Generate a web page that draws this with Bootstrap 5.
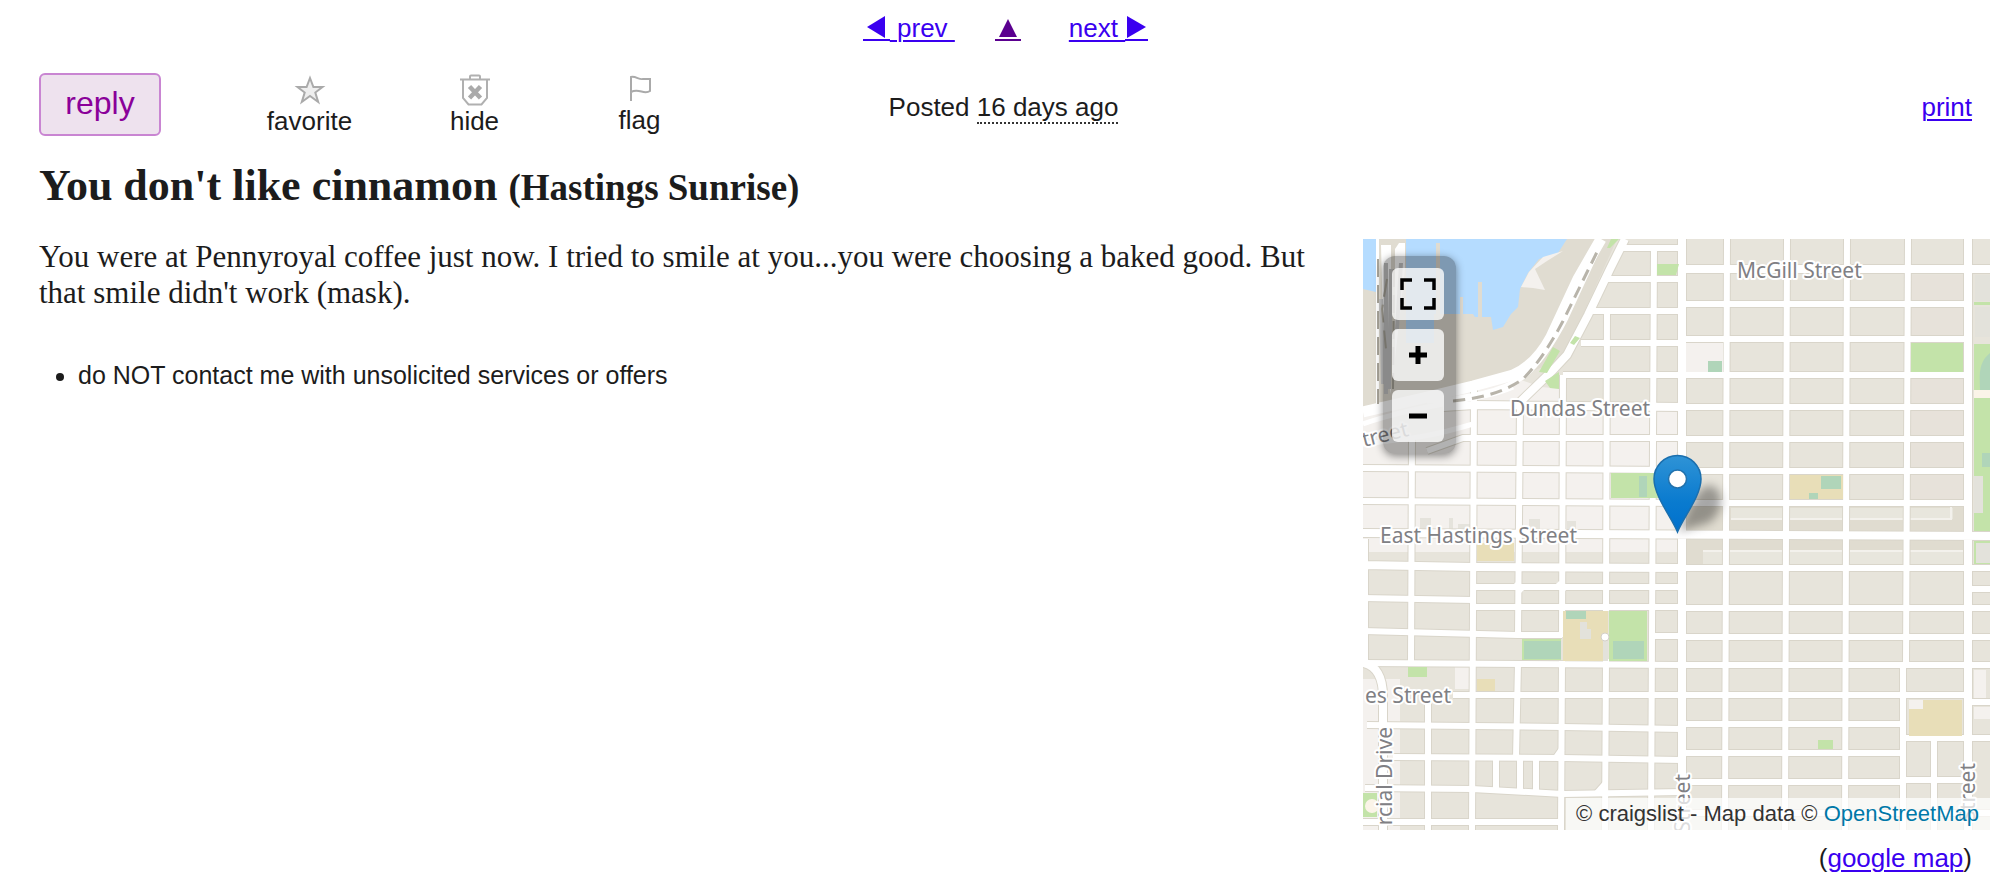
<!DOCTYPE html>
<html lang="en">
<head>
<meta charset="utf-8">
<meta name="viewport" content="width=device-width, initial-scale=1">
<title>You don't like cinnamon</title>
<link href="https://cdn.jsdelivr.net/npm/bootstrap@5.3.0/dist/css/bootstrap.min.css" rel="stylesheet">
<style>
body{font-family:"Liberation Sans",Arial,sans-serif;font-size:26px;line-height:30px;color:#1c1c1c;background:#fff}
a{color:#3a00f0;text-decoration-thickness:2px;text-underline-offset:3px}
a:hover{color:#3a00f0}
.page-head{padding:13px 28px 0 39px}
.pager{gap:40px;height:30px}
.pager a{text-decoration:none;white-space:pre}
.pager a span{text-decoration:underline;text-decoration-thickness:2px;text-underline-offset:3px}
.pager svg{vertical-align:-5px}
.pager .up-link{color:#5b0090}
.action-bar{display:grid;grid-template-columns:1fr auto 1fr;margin-top:30px}
.btn-reply{font-size:32px;line-height:36px;width:122px;height:63px;padding:0 0 4px;color:#8a0099;background:#eee2ee;border:2px solid #c985d2;border-radius:6px;margin-right:66px}
.btn-act{width:165px;border:0;background:none;padding:0;color:#1c1c1c;line-height:30px}
.btn-act svg{display:block;margin:0 auto}
.posted,.print-link{padding-top:19px}
.posted time{border-bottom:2px dotted #333}
.post-title{font-family:"Liberation Serif","Times New Roman",serif;font-weight:700;font-size:44px;line-height:48px;margin:26px 0 0}
.post-title small{font-size:37px;font-weight:700}
.post-body{padding:27px 10px 0 39px;gap:30px}
.post-text{font-family:"Liberation Serif","Times New Roman",serif;font-size:31px;line-height:36px;margin:0}
.notices{font-size:25px;line-height:30px;margin:49px 0 0;padding-left:39px}
.map-col{flex:0 0 627px;max-width:100%}
.map-box{height:591px;overflow:hidden}
.map-tools{left:20px;top:17px;padding:12px 12px 12px 9px;gap:9px;background:rgba(0,0,0,.3);border-radius:12px;box-shadow:0 2px 8px rgba(0,0,0,.45)}
.map-tools button{width:52px;height:52px;border:0;border-radius:6px;background:rgba(255,255,255,.78);padding:0}
.map-credit{right:0;bottom:0;height:32px;line-height:32px;font-size:22px;padding:0 11px 0 10px;background:rgba(255,255,255,.72);color:#333;white-space:nowrap}
.map-credit a{color:#0078a8;text-decoration:none}
.map-label{font-family:"Noto Sans","Open Sans",sans-serif;font-size:21px;fill:#808084;stroke:#fff;stroke-width:4px;stroke-linejoin:round;paint-order:stroke}
.map-link{padding:13px 18px 0 0}
</style>
</head>
<body>
<header class="page-head">
  <nav class="pager d-flex justify-content-center" aria-label="Postings">
    <a href="#prev"><svg width="27" height="27" viewBox="0 0 27 27"><path d="M4 12 22 1V23Z" fill="currentColor"/><path d="M0 25H27" stroke="currentColor" stroke-width="2"/></svg><span>&nbsp;prev&nbsp;</span></a>
    <a href="#up" class="up-link" aria-label="back to list"><svg width="26" height="27" viewBox="0 0 26 27"><path d="M13 4 22 22H4Z" fill="currentColor"/><path d="M0 25H26" stroke="currentColor" stroke-width="2"/></svg></a>
    <a href="#next" class="ms-2"><span>next&nbsp;</span><svg width="23" height="27" viewBox="0 0 23 27"><path d="M21 12 2 1V23Z" fill="currentColor"/><path d="M0 25H23" stroke="currentColor" stroke-width="2"/></svg></a>
  </nav>
  <div class="action-bar">
    <div class="d-flex">
      <button type="button" class="btn-reply">reply</button>
      <button type="button" class="btn-act"><svg width="32" height="32" viewBox="0 0 32 32"><path d="M16 4 19.400 13H28.500L21.300 18.500 24.200 28 16 22 7.800 28 10.700 18.500 3.500 13H12.600Z" fill="#eee" stroke="#aaa" stroke-width="2"/></svg>favorite</button>
      <button type="button" class="btn-act"><svg width="32" height="32" viewBox="0 0 32 32"><path d="M1 5.500H31M11 5V2.500Q11 1.500 12 1.500H20Q21 1.500 21 2.500V5M4 6V24L9.500 30.500H22.500L28 24V6" fill="none" stroke="#b0b0b0" stroke-width="2"/><path d="M10.500 12.500 21.500 24M21.500 12.500 10.500 24" stroke="#aaa" stroke-width="4.500"/></svg>hide</button>
      <button type="button" class="btn-act"><svg width="32" height="30" viewBox="0 0 32 30"><path d="M7 26V2C12 1 15 5 19 4L26 4V16C20 20 15 13 7 17" fill="none" stroke="#aaa" stroke-width="2"/></svg>flag</button>
    </div>
    <div class="posted pe-1">Posted <time>16 days ago</time></div>
    <div class="print-link text-end"><a href="#print">print</a></div>
  </div>
  <h1 class="post-title">You don't like cinnamon <small>(Hastings Sunrise)</small></h1>
</header>
<main class="post-body d-flex flex-wrap flex-xl-nowrap">
  <section class="flex-grow-1">
    <p class="post-text">You were at Pennyroyal coffee just now. I tried to smile at you...you were choosing a baked good. But that smile didn't work (mask).</p>
    <ul class="notices"><li>do NOT contact me with unsolicited services or offers</li></ul>
  </section>
  <aside class="map-col">
    <div class="map-box position-relative">
      <svg width="100%" height="100%" viewBox="0 0 627 591" preserveAspectRatio="xMidYMid slice" role="img" aria-label="Map of Hastings Sunrise">
        <defs>
          <linearGradient id="pinFill" x1="0" y1="0" x2="0" y2="1"><stop offset="0" stop-color="#2f93d6"/><stop offset=".6" stop-color="#0a7bcf"/><stop offset="1" stop-color="#0070cd"/></linearGradient>
          <filter id="soft" x="-30%" y="-30%" width="160%" height="160%"><feGaussianBlur stdDeviation="5"/></filter>
          <g id="streets" fill="none">
            <path d="M257 9H319M241 40H319M224 72H319M218 104H319M200 136H319M64 212 100 199H319M0 229 319 231M0 262 319 264M112 348H319M0 359 110 361M110 368H319M0 392 155 396H199M288 397H319M0 424 319 426M90 456H319M4 486 200 488 319 490M30 518 200 519 319 521M2 549 109 550 200 555 319 553M0 583H200"/>
            <path d="M319 65H605M319 100H605M319 136H605M319 168H605M319 200H605M319 232H605M319 264H605M319 329H605M319 369H627M319 398H627M319 426H627M319 456H605M605 463H627M319 485H542M319 514H542M319 543H542M542 499H627M542 541H605M605 329H627M605 350H627M319 574H627"/>
            <path d="M49 200 48 424M111 148 109 591M157 165 155 396M155 424 153 519M200 136 199 398M199 422 198 591M244 72 243 372M243 420 242 591M291 9 288 591M65 456 65 591M133 519V553M157 519V553M173 519V553"/>
            <path d="M364 0 362 591M424 0 422 591M484 0 482 591M545 0 543 426M540 426V591M571 499V591"/>
            <path d="M152 344 160 352M194 344 202 352M199 510 192 520M242 545 234 554"/>
          </g>
          <g id="avenues" fill="none">
            <path d="M319 0V591M605 0V591M319 30H627M80 168 111 166 319 168M0 294 627 297M0 326 110 328 319 329M0 424Q20 428 20 458V591M1 300V424M262 0 247 30 225 76 204 116 190 131 157 163"/>
          </g>
        </defs>
        <rect width="627" height="591" fill="#e7e4db"/>
        <path d="M0 165 150 138 178 148 200 150V168H319V313H0Z" fill="#f4f1ee"/>
        <path d="M0 0H254L200 120 150 140 0 168Z" fill="#e0dcd1"/>
        <path d="M0 0H13V53L0 50ZM43 0H204L195 14 176 20 165 34 157 50 155 68 148 75 140 88 130 91 128 78H112L110 75H71V104H43Z" fill="#b5dcff"/>
        <path d="M158 48 166 33 180 18 200 12 184 22 172 30 182 51 170 49Z" fill="#f4f1ee"/>
        <path d="M115 43H119V78H115ZM73 4H77V75H73ZM97 58H100V76H97Z" fill="#e0dcd1"/>
        <path d="M547 36H603V329H547Z" fill="#e7e2da"/>
        <path d="M323 268H603V293H323ZM323 301H603V326H323Z" fill="#e0dcd0"/>
        <path d="M368 269H590V280H368ZM340 313H603V325H340Z" fill="#e8e6dd"/>
        <path d="M368 280H588V268M340 312H603" fill="none" stroke="#f3f1ec" stroke-width="2"/>
        <path d="M0 440H37V591H0ZM92 428H107V450H92Z" fill="#f4f1ee"/>
        <path d="M57 279H68V293H57ZM86 279H90V293H86ZM95 285H108V293H95ZM166 280H177V293H166ZM204 282H213V290H204Z" fill="#e5e3dc"/>
        <use href="#streets" stroke="#d9d5ca" stroke-width="8"/>
        <use href="#avenues" stroke="#d9d5ca" stroke-width="10"/>
        <use href="#streets" stroke="#fff" stroke-width="6"/>
        <use href="#avenues" stroke="#fff" stroke-width="8"/>
        <path d="M0 173 60 159 110 147 150 136Q173 126 188 98L215 40 238 0" fill="none" stroke="#fff" stroke-width="11"/>
        <path d="M0 185C60 164 120 162 150 148M0 205C40 200 60 200 110 185" fill="none" stroke="#fff" stroke-width="5"/>
        <path d="M64 162Q130 158 160 138Q182 120 203 79L234 12" fill="none" stroke="#fff" stroke-width="5"/>
        <path d="M90 162Q135 158 160 140Q180 120 200 82L235 11" fill="none" stroke="#b8b4aa" stroke-width="3" stroke-dasharray="12 7"/>
        <path d="M13 0H16V165H13ZM36 4H42V30L32 120V10ZM18 6H28V155L21 120Z" fill="#fff"/>
        <path d="M23 24V155M28 30 26 150M38 24 34 90M18 60 20 145" fill="none" stroke="#c6c6c6" stroke-width="4"/>
        <path d="M15 20V165M24 40 19 70 23 110M31 30 30 150" fill="none" stroke="#aaa69b" stroke-width="2" stroke-dasharray="18 8"/>
        <path d="M244 9 248 0H256L247 9ZM294 25H316L313 36H294ZM176 133 190 108 197 112 184 134ZM182 142 196 133V150L187 149ZM207 104 212 97 217 99 211 106ZM248 234H310V259H248ZM548 104H600V133H548ZM611 105H627V151H611ZM611 159H627V292H611ZM611 63H627V66H611ZM159 400H198V421H159ZM246 372H284V422H246ZM45 428H64V438H45ZM0 554H14V578H0ZM455 501H470V510H455ZM611 302H627V325H611Z" fill="#c3e3a9"/>
        <path d="M323 104H360V133H323ZM546 461H599V497H546ZM611 431H623V459H611ZM611 468H627V480H611ZM301 302H310V311H301Z" fill="#f4f1ee"/>
        <path d="M200 372H245V422H200ZM114 304H151V322H114ZM114 440H132V452H114ZM427 236H480V260H427ZM560 461H599V497H546V470H560Z" fill="#e8deb8"/>
        <path d="M203 372H223V380H203ZM161 402H198V420H161ZM250 402H281V420H250ZM458 237H478V250H458ZM446 254H455V260H446ZM345 122H359V133H345ZM627 114C614 124 617 140 617 151H627ZM619 214H627V228H619ZM276 237H284V258H276Z" fill="#b0d5b9"/>
        <path d="M217 383H224V390H228V400H217ZM240 402H245V422H240ZM611 237H620V274H611ZM613 304H627V324H613ZM612 36H627V62H612ZM612 68H627V98H612Z" fill="#e3e2db"/>
        <path d="M611 151H627V159H611Z" fill="#fbf4e8"/>
        <circle cx="242" cy="398" r="4" fill="#fff" stroke="#d4d0c8"/>
        <circle cx="9" cy="567" r="7" fill="#fbf4e8"/>
        <g class="map-label">
          <text x="374" y="39">McGill Street</text>
          <text x="147" y="177">Dundas Street</text>
          <text x="17" y="304">East Hastings Street</text>
          <text x="2" y="464">es Street</text>
          <text transform="translate(1 208) rotate(-14)">treet</text>
          <text transform="translate(29 488) rotate(-90)" text-anchor="end">rcial Drive</text>
          <text transform="translate(327 535) rotate(-90)" text-anchor="end">Street</text>
          <text transform="translate(612 524) rotate(-90)" text-anchor="end">Street</text>
        </g>
        <path d="M315 293C326 270 332 250 346 246C364 250 360 276 345 284Z" fill="#000" opacity=".34" filter="url(#soft)"/>
        <path d="M314.500 293C309 279 291 257 291 240A23.500 23.500 0 0 1 338 240C338 257 320 279 314.500 293Z" fill="url(#pinFill)" stroke="#1b6fae" stroke-width="1.500"/>
        <circle cx="314.500" cy="240" r="9" fill="#fff" stroke="#2272ad" stroke-width="1.500"/>
      </svg>
      <div class="map-tools position-absolute d-flex flex-column">
        <button type="button" aria-label="Full screen"><svg class="d-block mx-auto" width="36" height="32" viewBox="0 0 36 32"><path d="M2 12V2H12M24 2H34V12M34 20V30H24M12 30H2V20" fill="none" stroke="#000" stroke-width="3.500"/></svg></button>
        <button type="button" aria-label="Zoom in"><svg class="d-block mx-auto" width="18" height="18" viewBox="0 0 18 18"><path d="M9 0V18M0 9H18" stroke="#000" stroke-width="5"/></svg></button>
        <button type="button" aria-label="Zoom out"><svg class="d-block mx-auto" width="18" height="18" viewBox="0 0 18 18"><path d="M0 9H18" stroke="#000" stroke-width="5"/></svg></button>
      </div>
      <div class="map-credit position-absolute">© craigslist - Map data © <a href="#osm">OpenStreetMap</a></div>
    </div>
    <div class="map-link text-end">(<a href="#google">google map</a>)</div>
  </aside>
</main>
<script src="https://cdn.jsdelivr.net/npm/bootstrap@5.3.0/dist/js/bootstrap.bundle.min.js"></script>
</body>
</html>
